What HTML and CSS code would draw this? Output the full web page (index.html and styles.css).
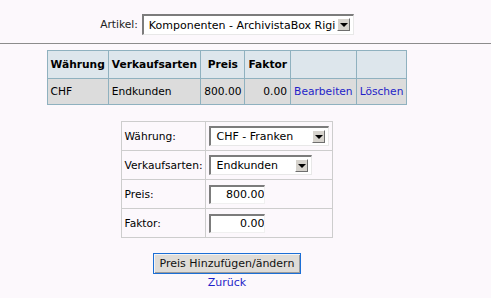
FILE: index.html
```html
<!DOCTYPE html>
<html lang="de">
<head>
  <meta charset="UTF-8" />
  <title>Preise</title>
  <link rel="stylesheet" href="styles.css">
</head>
<body>

<div class="top">
  <label class="top-label">Artikel:</label>
  <span class="combo combo-artikel">
    <select><option>Komponenten - ArchivistaBox Rigi</option></select>
    <span class="arrow"></span>
  </span>
</div>

<hr class="rule">

<div class="page">
  <table class="prices">
    <tr>
      <th>Währung</th>
      <th>Verkaufsarten</th>
      <th>Preis</th>
      <th>Faktor</th>
      <th></th>
      <th></th>
    </tr>
    <tr>
      <td>CHF</td>
      <td>Endkunden</td>
      <td class="num">800.00</td>
      <td class="num">0.00</td>
      <td><a href="#">Bearbeiten</a></td>
      <td><a href="#">Löschen</a></td>
    </tr>
  </table>

  <table class="form">
    <tr>
      <td>Währung:</td>
      <td>
        <span class="combo combo-currency">
          <select><option>CHF - Franken</option></select>
          <span class="arrow"></span>
        </span>
      </td>
    </tr>
    <tr>
      <td>Verkaufsarten:</td>
      <td>
        <span class="combo combo-type">
          <select><option>Endkunden</option></select>
          <span class="arrow"></span>
        </span>
      </td>
    </tr>
    <tr>
      <td>Preis:</td>
      <td><input class="field" type="text" value="800.00"></td>
    </tr>
    <tr>
      <td>Faktor:</td>
      <td><input class="field" type="text" value="0.00"></td>
    </tr>
  </table>

  <div class="actions">
    <button class="save-btn">Preis Hinzufügen/ändern</button>
    <a class="back" href="#">Zurück</a>
  </div>
</div>

</body>
</html>
```

FILE: styles.css
```css
body {
  margin: 0;
  background: #fcf8fc;
  font-family: "DejaVu Sans", Verdana, sans-serif;
  font-size: 8pt;
  color: #000;
}
a {
  color: #1f1fc8;
  text-decoration: none;
}
.top {
  width: 454px;
  padding-top: 14px;
  display: flex;
  justify-content: center;
  align-items: center;
  gap: 4px;
  color: #222;
}
.rule {
  border: none;
  border-top: 1px solid #8c8c8c;
  margin: 8px 0 6px;
}
.page {
  width: 454px;
  display: flex;
  flex-direction: column;
  align-items: center;
}

/* fake old style dropdowns */
.combo {
  position: relative;
  display: inline-block;
  background: #fff;
  border-top: 2px solid #7c7c7c;
  border-left: 2px solid #7c7c7c;
  border-right: 1px solid #e8e8e8;
  border-bottom: 1px solid #e8e8e8;
}
.combo select {
  appearance: none;
  -webkit-appearance: none;
  border: none;
  background: transparent;
  font: inherit;
  color: #000;
  height: 17px;
  padding: 0 0 0 5px;
  margin: 0;
  outline: none;
}
.combo-artikel select {
  width: 209px;
  font-size: 11px;
  height: 18px;
}
.combo-currency select {
  width: 117px;
  font-size: 11px;
}
.combo-type select {
  width: 100px;
  font-size: 11px;
}
.arrow {
  position: absolute;
  right: 3px;
  top: 2px;
  width: 11px;
  height: 11px;
  background: #d6d3cd;
  border-top: 1px solid #fff;
  border-left: 1px solid #fff;
  border-right: 1px solid #6e6e6e;
  border-bottom: 1px solid #6e6e6e;
}
.arrow::after {
  content: "";
  position: absolute;
  left: 2px;
  top: 4px;
  border-left: 4px solid transparent;
  border-right: 4px solid transparent;
  border-top: 4px solid #000;
}

.prices {
  border-collapse: collapse;
}
.prices th,
.prices td {
  border: 1px solid #8fb1bf;
  padding: 7px 3px;
  line-height: 13px;
  text-align: left;
  white-space: nowrap;
}
.prices td {
  padding: 6px 3px;
  background: #dcdcdc;
}
.prices th {
  background: #dde6ec;
  font-weight: bold;
}
.prices th:nth-child(3),
.prices th:nth-child(4) {
  text-align: center;
}
.prices td.num {
  text-align: right;
}

.form {
  border-collapse: collapse;
  margin-top: 16px;
}
.form td {
  border: 1px solid #cdcdcd;
  padding: 4px 3px;
  height: 20px;
}
.field {
  width: 53px;
  height: 16px;
  box-sizing: content-box;
  font: inherit;
  font-size: 11px;
  text-align: right;
  padding: 0;
  background: #fff;
  border-top: 2px solid #7c7c7c;
  border-left: 2px solid #7c7c7c;
  border-right: 1px solid #f0f0f0;
  border-bottom: 1px solid #f0f0f0;
  outline: none;
}

.actions {
  margin-top: 15px;
  display: flex;
  flex-direction: column;
  align-items: center;
  gap: 2px;
}
.save-btn {
  font: inherit;
  font-size: 11px;
  color: #111;
  background: #dfdcd7;
  border: 1px solid #1c6fd6;
  box-shadow: inset 1px 1px 0 #f4f4f4, inset -1px -1px 0 #9a9a9a;
  padding: 2px 6px;
  height: 21px;
}
.back {
  font-size: 11px;
}
```
